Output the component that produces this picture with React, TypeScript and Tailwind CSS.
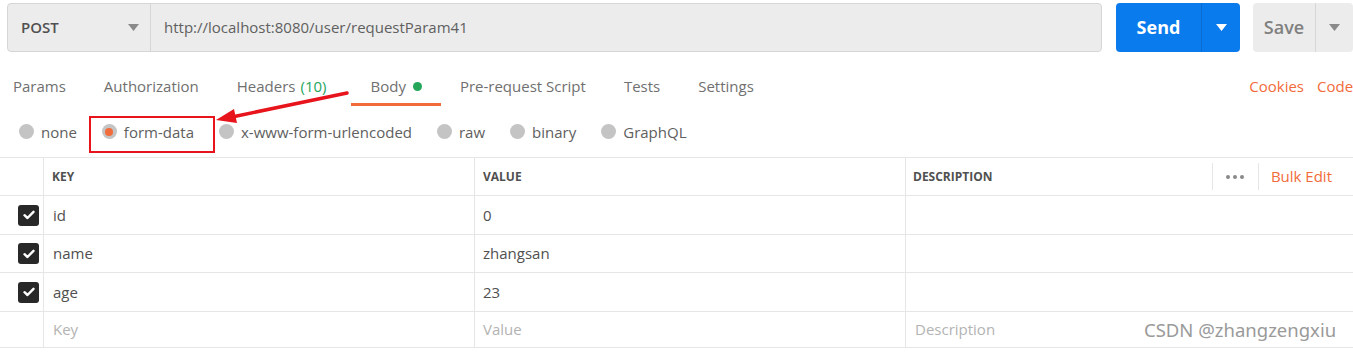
import React from "react";

const font = { fontFamily: '"Open Sans", "Noto Sans", sans-serif' };

function Caret({ color = "#8a8a8a" }: { color?: string }) {
  return (
    <svg width="11" height="7" viewBox="0 0 11 7">
      <path d="M0 0 L11 0 L5.5 7 Z" fill={color} />
    </svg>
  );
}

function Radio({ label, checked }: { label: string; checked?: boolean }) {
  return (
    <div className="flex items-center">
      <div className="w-[15px] h-[15px] rounded-full bg-[#c4c4c4] flex items-center justify-center">
        {checked && <div className="w-[8px] h-[8px] rounded-full bg-[#f26b3a]" />}
      </div>
      <span className="ml-[7px] text-[15px] text-[#606060] leading-5">{label}</span>
    </div>
  );
}

function Check() {
  return (
    <div className="w-[21px] h-[21px] rounded-[3px] bg-[#282828] flex items-center justify-center">
      <svg width="12" height="10" viewBox="0 0 12 10">
        <path d="M1.5 5.2 L4.5 8 L10.5 1.8" stroke="#fff" strokeWidth="2.4" fill="none" strokeLinecap="round" strokeLinejoin="round" />
      </svg>
    </div>
  );
}

function Row({ h, k, v, checked, placeholder }: { h: string; k: string; v: string; checked?: boolean; placeholder?: boolean }) {
  const tc = placeholder ? "text-[#b3b3b3]" : "text-[#505050]";
  return (
    <div className={`flex border-b border-[#e6e6e6] ${h}`}>
      <div className="w-[44px] border-r border-[#e6e6e6] flex items-center pl-[18px]">
        {checked && <Check />}
      </div>
      <div className={`w-[431px] border-r border-[#e6e6e6] flex items-center pl-[9px] text-[15px] ${tc}`}>{k}</div>
      <div className={`w-[431px] border-r border-[#e6e6e6] flex items-center pl-[8px] text-[15px] ${tc}`}>{v}</div>
      <div className={`flex-1 flex items-center pl-[9px] text-[15px] ${tc}`}>{placeholder ? "Description" : ""}</div>
    </div>
  );
}

export default function App() {
  const tabs = ["Params", "Authorization", "Headers", "Body", "Pre-request Script", "Tests", "Settings"];
  return (
    <div className="relative w-[1353px] h-[357px] bg-white overflow-hidden" style={font}>
      {/* Top bar */}
      <div className="flex pt-[3px] h-[52px]">
        <div className="ml-[7px] flex w-[1095px] h-[49px] bg-[#ececec] border border-[#d6d6d6] rounded-[4px]">
          <div className="w-[143px] border-r border-[#d6d6d6] flex items-center justify-between pl-[13px] pr-[11px]">
            <span className="text-[15px] font-semibold text-[#505050]">POST</span>
            <Caret />
          </div>
          <div className="flex items-center pl-[13px] text-[15px] text-[#606060]">http://localhost:8080/user/requestParam41</div>
        </div>
        <div className="ml-[14px] flex w-[124px] h-[49px] bg-[#097bed] rounded-[4px]">
          <div className="w-[86px] flex items-center justify-center border-r border-[#0a6ccf] text-[18px] font-bold text-white">Send</div>
          <div className="flex-1 flex items-center justify-center"><Caret color="#ffffff" /></div>
        </div>
        <div className="ml-[13px] flex flex-1 h-[49px] bg-[#ececec] rounded-[4px]">
          <div className="w-[63px] flex items-center justify-center border-r border-[#d6d6d6] text-[18px] font-semibold text-[#808080]">Save</div>
          <div className="flex-1 flex items-center justify-center"><Caret /></div>
        </div>
      </div>

      {/* Tabs */}
      <div className="flex mt-[14px] h-[40px]">
        {tabs.map((t, i) => (
          <div
            key={t}
            className={`${i === 0 ? "pl-[13px]" : "pl-[19px]"} pr-[19px] pt-[10px] text-[15px] leading-5 text-[#707070] ${t === "Body" ? "border-b-[3px] border-[#f26b3a] text-[#505050] ml-[6px]" : ""} flex items-start`}
          >
            <span>{t}</span>
            {t === "Headers" && <span className="ml-[5px] text-[#26a65b]">(10)</span>}
            {t === "Body" && <span className="ml-[7px] mt-[6px] w-[9px] h-[9px] rounded-full bg-[#26a65b]" />}
          </div>
        ))}
        <div className="ml-auto flex pt-[10px] text-[15px] leading-5 text-[#f26b3a]">
          <span>Cookies</span>
          <span className="ml-[13px] w-[36px]">Code</span>
        </div>
      </div>

      {/* Radios */}
      <div className="flex items-center h-[51px] pl-[19px] gap-[25px]">
        <Radio label="none" />
        <Radio label="form-data" checked />
        <Radio label="x-www-form-urlencoded" />
        <Radio label="raw" />
        <Radio label="binary" />
        <Radio label="GraphQL" />
      </div>

      {/* Table */}
      <div className="border-t border-[#e6e6e6]">
        <div className="flex h-[38px] border-b border-[#e6e6e6]">
          <div className="w-[44px] border-r border-[#e6e6e6]" />
          <div className="w-[431px] border-r border-[#e6e6e6] flex items-center pl-[8px] text-[12px] font-bold text-[#505050]">KEY</div>
          <div className="w-[431px] border-r border-[#e6e6e6] flex items-center pl-[8px] text-[12px] font-bold text-[#505050]">VALUE</div>
          <div className="flex-1 flex items-center pl-[7px] text-[12px] font-bold text-[#505050]">
            <span>DESCRIPTION</span>
            <div className="ml-auto flex items-center h-full">
              <div className="w-px h-[27px] bg-[#e6e6e6]" />
              <div className="w-[45px] flex items-center justify-center gap-[3px]">
                <span className="w-[4px] h-[4px] rounded-full bg-[#8a8a8a]" />
                <span className="w-[4px] h-[4px] rounded-full bg-[#8a8a8a]" />
                <span className="w-[4px] h-[4px] rounded-full bg-[#8a8a8a]" />
              </div>
              <div className="w-px h-[27px] bg-[#e6e6e6]" />
              <span className="ml-[12px] mr-[21px] text-[15px] font-normal text-[#f26b3a]">Bulk Edit</span>
            </div>
          </div>
        </div>
        <Row h="h-[39px]" k="id" v="0" checked />
        <Row h="h-[38px]" k="name" v="zhangsan" checked />
        <Row h="h-[39px]" k="age" v="23" checked />
        <Row h="h-[36px]" k="Key" v="Value" placeholder />
      </div>

      {/* Annotation: red box and arrow */}
      <div className="absolute left-[89px] top-[116px] w-[126px] h-[37px] border-2 border-[#e8141c]" />
      <svg className="absolute left-0 top-0" width="1353" height="357" style={{ pointerEvents: "none" }}>
        <line x1="347" y1="93" x2="232" y2="117" stroke="#e8141c" strokeWidth="3.5" strokeLinecap="round" />
        <polygon points="216,120 234,109 237,123" fill="#e8141c" />
      </svg>

      {/* Watermark */}
      <div
        className="absolute left-[1144px] top-[318px] text-[18.5px] text-[#9a9a9a] leading-6"
        style={{ fontFamily: '"Noto Sans", "Noto Sans CJK SC", sans-serif' }}
      >
        CSDN @zhangzengxiu
      </div>
    </div>
  );
}
